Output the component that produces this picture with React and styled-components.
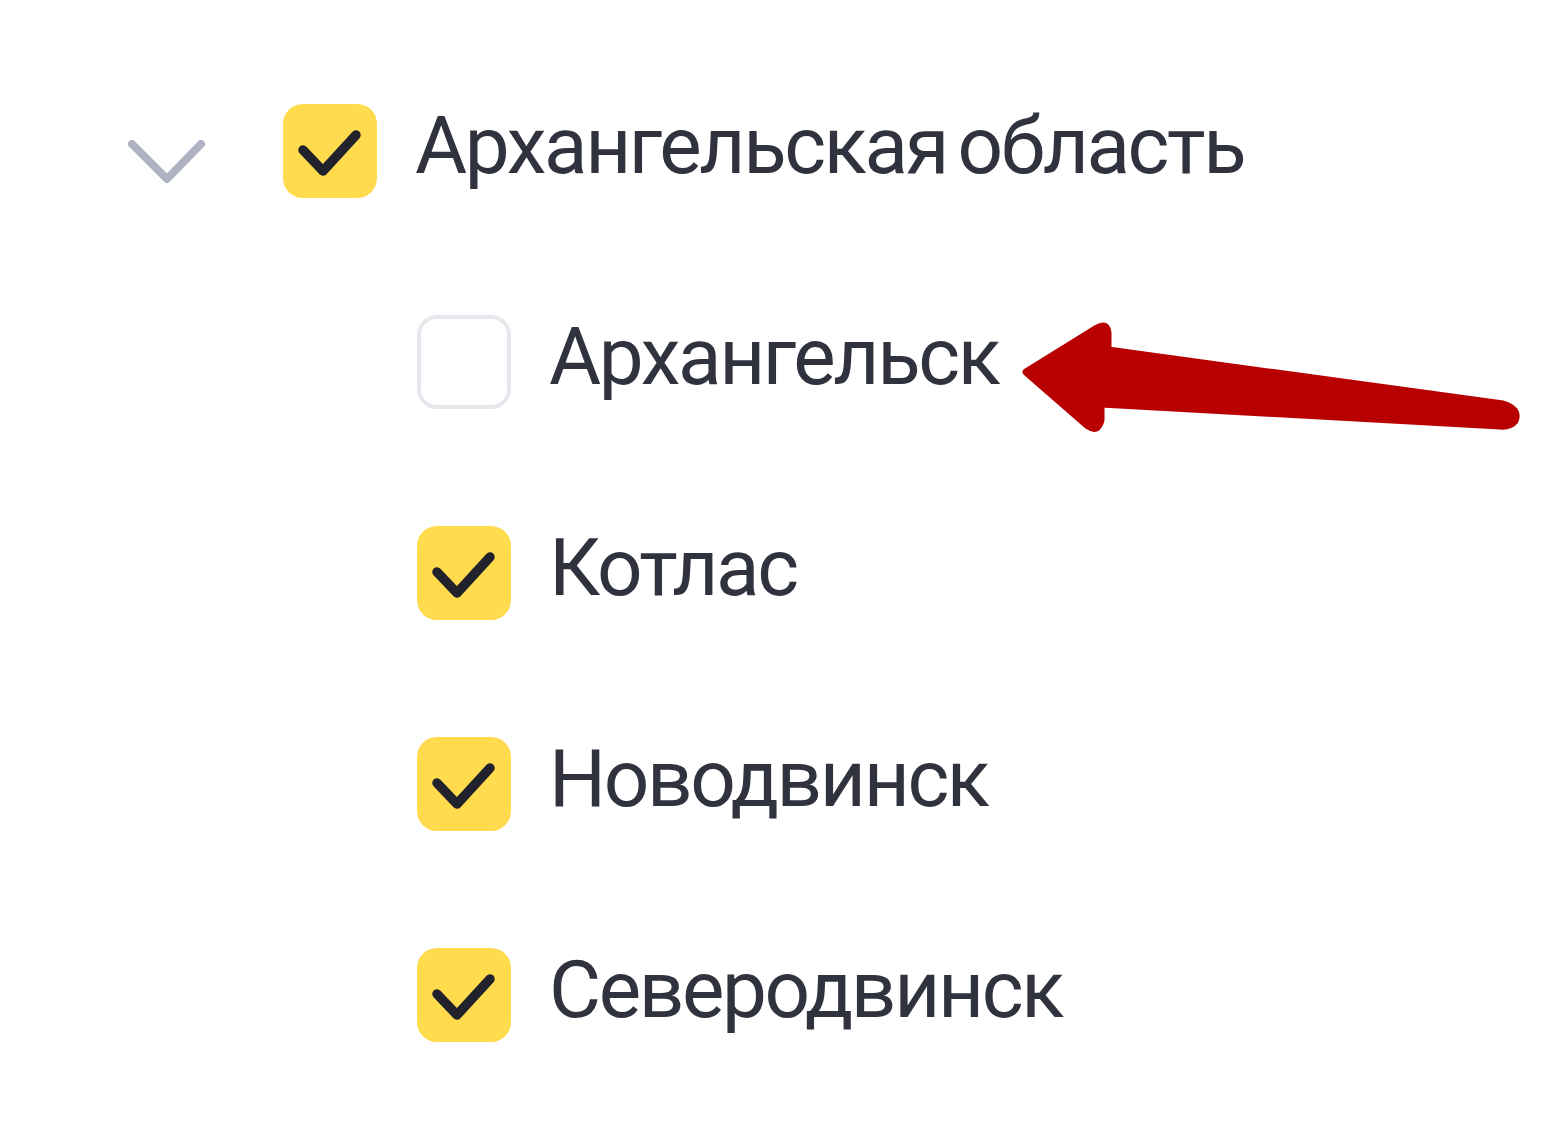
import React from "react";
import styled, { createGlobalStyle } from "styled-components";

const Global = createGlobalStyle`
  html, body { margin: 0; padding: 0; background: #ffffff; }
  body { font-family: Roboto, "Noto Sans", Arial, sans-serif; }
`;

const Page = styled.div`
  position: relative;
  width: 1541px;
  height: 1144px;
  overflow: hidden;
  background: #ffffff;
`;

const Tree = styled.ul`
  list-style: none;
  margin: 0;
  padding: 45px 0 0 128px;
`;

const Row = styled.li`
  display: flex;
  align-items: center;
  height: 211px;
  padding-left: ${(p) => (p.$child ? "289px" : "0")};
`;

const ChevronSlot = styled.span`
  display: flex;
  align-items: center;
  justify-content: center;
  width: 77px;
  margin-right: 78px;
  margin-top: 22px;
`;

const Box = styled.span`
  flex: none;
  box-sizing: border-box;
  width: 94px;
  height: 94px;
  border-radius: 20px;
  display: flex;
  align-items: center;
  justify-content: center;
  background: ${(p) => (p.$checked ? "#ffdb4d" : "#ffffff")};
  border: ${(p) => (p.$checked ? "none" : "4px solid #e6e8ee")};
`;

const Label = styled.span`
  margin-left: 38px;
  margin-bottom: 10px;
  font-size: 80px;
  line-height: 1;
  color: #30323e;
  letter-spacing: -2.4px;
  word-spacing: -7px;
  white-space: nowrap;
`;

const Arrow = styled.svg`
  position: absolute;
  left: 1010px;
  top: 310px;
`;

const Check = () => (
  <svg width="94" height="94" viewBox="0 0 94 94">
    <path
      d="M20 46 L40 67 L73 31"
      fill="none"
      stroke="#21222c"
      strokeWidth="9.5"
      strokeLinecap="round"
      strokeLinejoin="round"
    />
  </svg>
);

const Chevron = () => (
  <svg width="77" height="44" viewBox="0 0 77 44">
    <path
      d="M4 4 L39 39 L73 4"
      fill="none"
      stroke="#aeb2c2"
      strokeWidth="8"
      strokeLinecap="round"
      strokeLinejoin="round"
    />
  </svg>
);

const items = [
  { name: "Архангельск", checked: false },
  { name: "Котлас", checked: true },
  { name: "Новодвинск", checked: true },
  { name: "Северодвинск", checked: true },
];

export default function App() {
  return (
    <Page>
      <Global />
      <Tree>
        <Row>
          <ChevronSlot>
            <Chevron />
          </ChevronSlot>
          <Box $checked>
            <Check />
          </Box>
          <Label>Архангельская область</Label>
        </Row>
        {items.map((it) => (
          <Row key={it.name} $child>
            <Box $checked={it.checked}>{it.checked && <Check />}</Box>
            <Label>{it.name}</Label>
          </Row>
        ))}
      </Tree>
      <Arrow width="531" height="140" viewBox="1010 310 531 140">
        <path
          d="M1026 372 L1097 328 Q1107 322 1108 333 L1108 350 L1503 404 Q1520 409 1515 421 Q1510 427 1500 426 L1101 404 L1101 420 Q1098 433 1088 426 Z"
          fill="#b80000"
          stroke="#b80000"
          strokeWidth="7"
          strokeLinejoin="round"
        />
      </Arrow>
    </Page>
  );
}
